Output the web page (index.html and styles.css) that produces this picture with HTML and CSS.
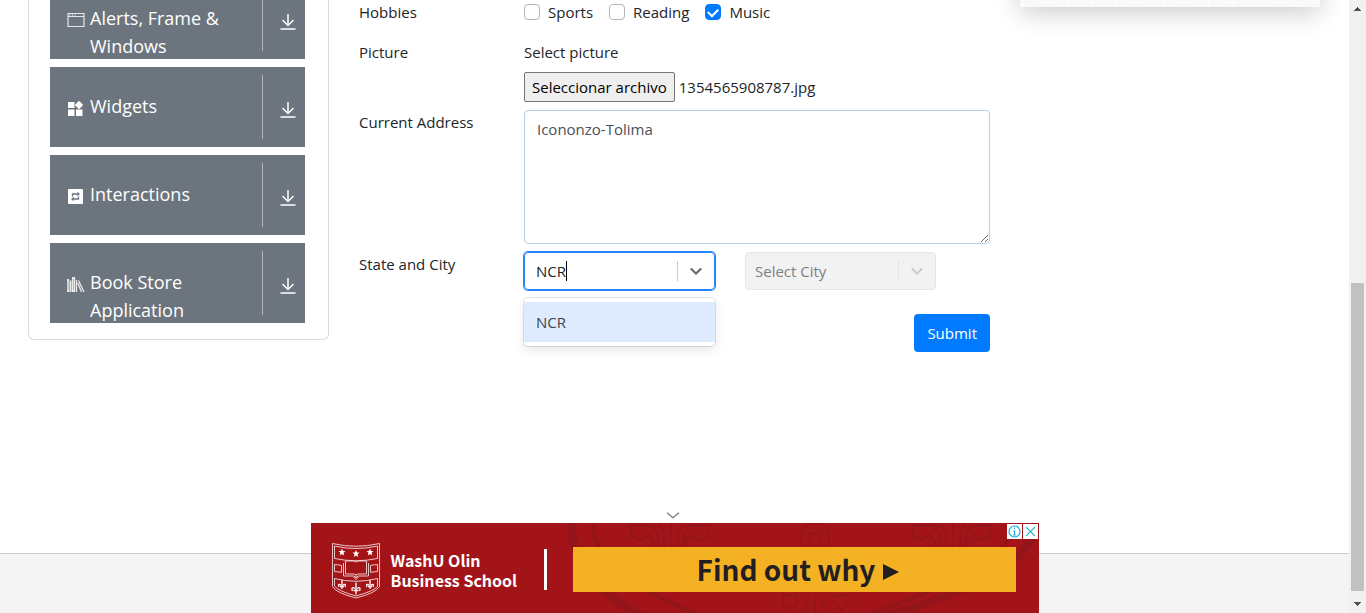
FILE: index.html
```html
<!DOCTYPE html>
<html lang="en">
<head>
<meta charset="utf-8">
<title>Practice Form</title>
<link rel="stylesheet" href="styles.css">
</head>
<body>
<div class="viewport">
  <div class="page">
    <main class="content">
      <nav class="sidebar">
        <button class="group" type="button">
          <svg class="group-icon" viewBox="0 0 18 18"><path d="M1 2.500h16v13H1zM1 5.500h16" fill="none" stroke="#e4e6e8" stroke-width="1.200"/><path d="M2.500 4h1M5 4h1M7.500 4h1" stroke="#fff"/></svg>
          <span class="group-name">Alerts, Frame &amp; Windows</span>
          <span class="group-toggle"><svg viewBox="0 0 16 16"><path d="M8 0v11M2.500 6 8 11.500 13.500 6M.5 15h15" /></svg></span>
        </button>
        <button class="group" type="button">
          <svg class="group-icon" viewBox="0 0 18 18"><path d="M1 3h6.500v6H1zM1 10.500h6.500V17H1zM9 10.500h6.500V17H9zM12 1.800l4.200 4.200-4.200 4.200L7.800 6z" fill="#fff"/></svg>
          <span class="group-name">Widgets</span>
          <span class="group-toggle"><svg viewBox="0 0 16 16"><path d="M8 0v11M2.500 6 8 11.500 13.500 6M.5 15h15" /></svg></span>
        </button>
        <button class="group" type="button">
          <svg class="group-icon" viewBox="0 0 18 18"><rect x="1" y="2" width="15" height="15" rx="1" fill="#fff"/><path d="M5.500 9.500V7H11M6 12h5.500V9.500" fill="none" stroke="#6c757d" stroke-width="1.300"/><path d="M10.300 4.700 13 7l-2.700 2.300zM6.700 9.700 4 12l2.700 2.300z" fill="#6c757d"/></svg>
          <span class="group-name">Interactions</span>
          <span class="group-toggle"><svg viewBox="0 0 16 16"><path d="M8 0v11M2.500 6 8 11.500 13.500 6M.5 15h15" /></svg></span>
        </button>
        <button class="group" type="button">
          <svg class="group-icon" viewBox="0 0 18 18"><path d="M0 4h2v13H0zM2.500 5.500h2V17h-2zM5 2h3.200v15H5z" fill="#e8eaec"/><path d="M1 6v9M6.500 4v11" stroke="#8b939a" stroke-width=".6"/><path d="M9.500 5v12M11.500 5.500 17 17M10.800 8l3.700 9" fill="none" stroke="#e8eaec" stroke-width="1.300"/></svg>
          <span class="group-name">Book Store Application</span>
          <span class="group-toggle"><svg viewBox="0 0 16 16"><path d="M8 0v11M2.500 6 8 11.500 13.500 6M.5 15h15" /></svg></span>
        </button>
      </nav>

      <form class="form">
        <div class="row row-hobbies" role="group" aria-labelledby="hobbies">
          <span id="hobbies">Hobbies</span>
          <div class="checks">
            <label class="check"><input type="checkbox">Sports</label>
            <label class="check"><input type="checkbox">Reading</label>
            <label class="check"><input type="checkbox" checked>Music</label>
          </div>
        </div>
        <div class="row">
          <span>Picture</span>
          <div class="upload">
            <span>Select picture</span>
            <div class="file">
              <input class="file-input" id="picture" type="file">
              <label class="file-button" for="picture">Seleccionar archivo</label>
              <span>1354565908787.jpg</span>
            </div>
          </div>
        </div>
        <div class="row">
          <label for="address">Current Address</label>
          <textarea class="address" id="address">Icononzo-Tolima</textarea>
        </div>
        <div class="row">
          <label for="state">State and City</label>
          <div class="selects">
            <div class="combo combo-open">
              <input class="combo-input" id="state" type="text" role="combobox" aria-expanded="true" aria-controls="states" value="NCR"><span class="caret"></span>
              <span class="combo-arrow"><svg viewBox="0 0 20 20"><path d="M4.800 7.500 10 12.500 15.200 7.500"/></svg></span>
              <div class="menu" id="states" role="listbox"><div class="option" role="option" aria-selected="true">NCR</div></div>
            </div>
            <div class="combo combo-disabled">
              <select class="combo-select" aria-label="City" disabled><option>Select City</option></select>
              <span class="combo-arrow"><svg viewBox="0 0 20 20"><path d="M4.800 7.500 10 12.500 15.200 7.500"/></svg></span>
            </div>
          </div>
        </div>
        <button class="submit" type="submit">Submit</button>
      </form>

      <aside class="promo">
        <svg class="promo-art" viewBox="0 0 300 7" preserveAspectRatio="none"><path d="M2 0v7M48 0v7M95 0v7M143 0v7M189 0v7M236 0v7M284 0v7M15 0l10 4 10-4M62 0l10 4 10-4M109 0l10 4 10-4M156 0l10 4 10-4M203 0l10 4 10-4M250 0l10 4 10-4M25 0v7M72 0v7M119 0v7M166 0v7M213 0v7M260 0v7" fill="none" stroke="#fff"/></svg>
      </aside>
    </main>
    <footer class="footer"></footer>

    <section class="banner" aria-label="Advertisement">
      <button class="banner-collapse" type="button" aria-label="Collapse"><svg viewBox="0 0 14 7"><path d="M1 .8 7 5.800 13 .8"/></svg></button>
      <svg class="banner-art" viewBox="0 0 728 90">
        <g fill="none" stroke="#931519">
          <path d="M260 0c0 30 20 75 90 100M725 0c-5 50-90 75-190 105" stroke-width="8"/>
          <path d="M282 0c0 40 40 65 110 94M700 0c0 45-60 60-150 94" stroke-width="4"/>
          <path d="M347 24V12l-7-10h-20v11l10 4 7-5 5 7v5M353 24V10l-6-9M360 24V0M367 24V10l6-9M373 24V12l7-10h17v11l-10 4-7-5-5 7v5" stroke-width="2"/>
          <path d="M629 24V12l-7-10h-20v11l10 4 7-5 5 7v5M635 24V10l-6-9M642 24V0M649 24V10l6-9M655 24V12l7-10h17v11l-10 4-7-5-5 7v5M490 24V8l8-8h12l8 8v16M499 24V10h10v14" stroke-width="2"/>
          <path d="M472 72h14v9l-7 6-7-6zM497 73v8l-7 9M504 73v17M511 73v8l7 9M523 72h14v9l-7 6-7-6z" stroke-width="2"/>
        </g>
      </svg>
      <svg class="crest" viewBox="0 0 48 56">
        <g fill="none" stroke="#f3d9da" stroke-width=".9">
          <path d="M.5.500Q24 6 47.500.500v43Q44 50 24 55Q4 50 .5 43.500z"/>
          <path d="M2.500 3Q24 8 45.500 3v12.500Q24 20 2.500 15.500zM2.500 35.500Q24 41 45.500 35.500v8Q42 48 24 53Q6 48 2.500 43z"/>
          <path d="M13.500 18H22l2 1 2-1h8.500v13H26l-2 1-2-1h-8.500zM11.500 20v13H22l2 2 2-2h10.500V20M2.500 21.500l7 .8v7l-7-.8zM45.500 21.500l-7 .8v7l7-.8zM22 34.500l2-2 2 2-2 2z"/>
        </g>
        <g fill="#fff">
          <path d="M10 5.500l1 2.500 2.500.1-2 1.700.7 2.600-2.200-1.500-2.200 1.500.7-2.600-2-1.700L9 8zM24 7l1 2.500 2.500.1-2 1.700.7 2.600-2.200-1.500-2.200 1.500.7-2.600-2-1.700 2.500-.1zM38 5.500l1 2.500 2.500.1-2 1.700.7 2.600-2.200-1.500-2.200 1.500.7-2.600-2-1.700L37 8z"/>
        </g>
        <path d="M10 37v9M7 44q-1.500-4 2-2M13 44q1.500-4-2-2M8 43.500h4M24 39.500v12M20.500 48q-2-5 2.500-2.500M27.500 48q2-5-2.500-2.500M21.500 47.500h5M38 37v9M35 44q-1.500-4 2-2M41 44q1.500-4-2-2M36 43.500h4" fill="none" stroke="#fff" stroke-width="1.300"/>
      </svg>
      <div class="school">WashU Olin<br>Business School</div>
      <span class="banner-rule"></span>
      <a class="cta" href="#">Find out why<svg class="cta-arrow" viewBox="0 0 16 16"><path d="M0 0l16 8-16 8z"/></svg></a>
      <div class="choices">
        <button class="choice" type="button" aria-label="Ad info"><svg viewBox="0 0 15 15"><circle cx="7.500" cy="7.500" r="5.500"/><path d="M7.500 6.500v4.500M6.500 6.500h1M6.300 11h2.400M7.500 3.600v1.400"/></svg></button>
        <button class="choice" type="button" aria-label="Close ad"><svg viewBox="0 0 15 15"><path d="M3.200 3.200l8.600 8.600M11.800 3.200l-8.600 8.600" /></svg></button>
      </div>
    </section>
  </div>
  <div class="scrollbar" aria-hidden="true">
    <svg class="scroll-arrow" viewBox="0 0 7 4" shape-rendering="crispEdges"><path d="M0 4 3.500 0 7 4z"/></svg>
    <span class="scroll-thumb"></span>
    <svg class="scroll-arrow" viewBox="0 0 7 4" shape-rendering="crispEdges"><path d="M0 0h7L3.500 4z"/></svg>
  </div>
</div>
</body>
</html>
```

FILE: styles.css
```css
* { box-sizing: border-box; }

body {
  margin: 0;
  color: #212529;
  background: #fff;
  font: 15px/24px "Open Sans", "Noto Sans", sans-serif;
}

button, input, select, textarea { font: inherit; color: inherit; }
button { border: 0; padding: 0; cursor: pointer; }
svg { display: block; }

.viewport {
  display: grid;
  grid-template-columns: minmax(0, 1fr) 17px;
  height: 100vh;
}

.page {
  position: relative;
  display: flex;
  flex-direction: column;
  overflow: hidden;
}

.content {
  flex: 1;
  display: grid;
  grid-template-columns: 301px minmax(0, 1fr) 300px;
  gap: 30px;
  align-items: start;
  padding: 0 29px 0 28px;
}

.footer {
  height: 60px;
  background: #f4f4f4;
  border-top: 1px solid #ccc;
}

/* Sidebar: the first group is partly scrolled out of view */
.sidebar {
  display: flex;
  flex-direction: column;
  gap: 8px;
  margin-top: -21px;
  padding: 0 23px 16px 21px;
  border: 1px solid #dcdcdc;
  border-top: 0;
  border-radius: 0 0 6px 6px;
}

.group {
  display: flex;
  align-items: flex-start;
  height: 80px;
  padding-left: 17px;
  overflow: hidden;
  color: #fff;
  background: #6c757d;
  font-size: 18px;
  line-height: 28px;
  text-align: left;
}

.group-icon { flex: none; width: 18px; height: 18px; margin-top: 32px; }
.group-name { flex: 1; margin: 25px 24px 0 5px; }

.group-toggle {
  flex: none;
  display: flex;
  justify-content: center;
  width: 43px;
  height: 64px;
  margin-top: 8px;
  padding: 27px 0 0 7px;
  border-left: 1px solid #b5b5b5;
}

.group-toggle svg { width: 16px; height: 16px; fill: none; stroke: #fff; stroke-width: 1.500; }

/* Form */
.form { display: flex; flex-direction: column; gap: 8px; }

.row {
  display: grid;
  grid-template-columns: 165px minmax(0, 1fr);
  align-items: start;
}

.row-hobbies { margin-bottom: 8px; }
.checks { display: flex; gap: 16px; }
.check { display: flex; align-items: center; gap: 8px; }

.check input {
  appearance: none;
  width: 16px;
  height: 16px;
  margin: 0;
  border: 1px solid #adb5bd;
  border-radius: 4px;
  background: #fff;
}

.check input:checked {
  display: grid;
  place-items: center;
  border-color: #007bff;
  background: #007bff;
}

.check input:checked::before {
  content: "";
  width: 8px;
  height: 5px;
  margin-bottom: 2px;
  border: solid #fff;
  border-width: 0 0 2px 2px;
  transform: rotate(-45deg);
}

.upload { display: flex; flex-direction: column; gap: 8px; }
.file { display: flex; align-items: center; gap: 4px; }
.file-input { position: absolute; width: 1px; height: 1px; opacity: 0; }

.file-button {
  padding: 2px 7px;
  color: #000;
  background: #efefef;
  border: 1px solid #767676;
  border-radius: 2px;
}

.address {
  display: block;
  width: 100%;
  height: 134px;
  padding: 6px 12px;
  color: #495057;
  background: #fff;
  border: 1px solid #b8cfe5;
  border-radius: 4px;
}

.selects {
  display: grid;
  grid-template-columns: repeat(2, 191px);
  gap: 30px;
}

.combo {
  position: relative;
  display: flex;
  align-items: center;
  height: 38px;
  border: 1px solid #ccc;
  border-radius: 4px;
}

.combo-open { padding-left: 11px; border-color: #2684ff; box-shadow: 0 0 0 1px #2684ff; }
.combo-disabled { color: #808080; background: #f2f2f2; border-color: #e6e6e6; }

.combo-input {
  field-sizing: content;
  padding: 0;
  border: 0;
  outline: 0;
  background: none;
}

.caret { width: 1px; height: 20px; background: #000; }

.combo-select {
  flex: 1;
  min-width: 0;
  height: 36px;
  padding: 0 0 0 9px;
  appearance: none;
  border: 0;
  background: none;
  opacity: 1;
}

.combo-arrow {
  display: grid;
  place-items: center;
  width: 37px;
  height: 20px;
  margin-left: auto;
  border-left: 1px solid #ccc;
}

.combo-disabled .combo-arrow { border-color: #e2e2e2; }
.combo-arrow svg { width: 20px; height: 20px; fill: none; stroke: #666; stroke-width: 2; }
.combo-disabled .combo-arrow svg { stroke: #ccc; }

.menu {
  position: absolute;
  top: 45px;
  left: -1px;
  right: -1px;
  padding: 4px 0;
  background: #fff;
  border-radius: 4px;
  box-shadow: 0 0 0 1px rgba(0, 0, 0, .1), 0 4px 11px rgba(0, 0, 0, .1);
}

.option { padding: 8px 12px; color: #40454a; background: #deebff; }

.submit {
  align-self: flex-end;
  margin-top: 16px;
  padding: 7px 13px;
  color: #fff;
  background: #007bff;
  border-radius: 4px;
}

/* Promo card: only its bottom strip is scrolled into view */
.promo {
  margin-top: -80px;
  padding-top: 80px;
  background: #f9f9f9;
  box-shadow: 0 6px 24px rgba(0, 0, 0, .2);
}

.promo-art { width: 100%; height: 7px; }

/* Anchored ad */
.banner {
  position: absolute;
  bottom: 0;
  left: 50%;
  display: flex;
  align-items: center;
  width: 728px;
  height: 90px;
  padding: 0 23px 0 21px;
  background: #a31419;
  transform: translateX(-50%);
  font-family: "Noto Sans CJK SC", "Noto Sans", sans-serif;
  font-weight: 700;
}

.banner-art { position: absolute; inset: 0; }
.banner-collapse { position: absolute; top: -11px; left: 355px; background: none; }
.banner-collapse svg { width: 14px; height: 7px; fill: none; stroke: #777; stroke-width: 1.200; }

.crest { flex: none; width: 48px; height: 56px; margin-top: 5px; }

.school {
  flex: 1;
  margin: 3px 0 0 11px;
  color: #fff;
  font-size: 16px;
  line-height: 20px;
}

.banner-rule { width: 3px; height: 41px; margin: 3px 26px 0 0; background: #fff; }

.cta {
  position: relative;
  display: flex;
  align-items: center;
  justify-content: center;
  gap: 8px;
  width: 443px;
  height: 45px;
  margin-top: 3px;
  padding-left: 8px;
  color: #231f20;
  background: #f4b124;
  font-size: 28px;
  line-height: 45px;
  text-decoration: none;
}

.cta-arrow { width: 16px; height: 16px; margin-top: 4px; fill: #231f20; }

.choices { position: absolute; top: 1px; right: 1px; display: flex; gap: 1px; }
.choice { width: 15px; height: 15px; background: #fff; }
.choice svg { width: 15px; height: 15px; fill: none; stroke: #18add0; stroke-width: 1.200; }

/* Scrollbar column */
.scrollbar {
  display: flex;
  flex-direction: column;
  align-items: center;
  justify-content: space-between;
  padding: 7px 0;
  background: #f1f1f1;
}

.scroll-thumb { width: 13px; height: 308px; margin: auto 0 11px; background: #c1c1c1; }
.scroll-arrow { width: 7px; height: 4px; fill: #505050; }
```
